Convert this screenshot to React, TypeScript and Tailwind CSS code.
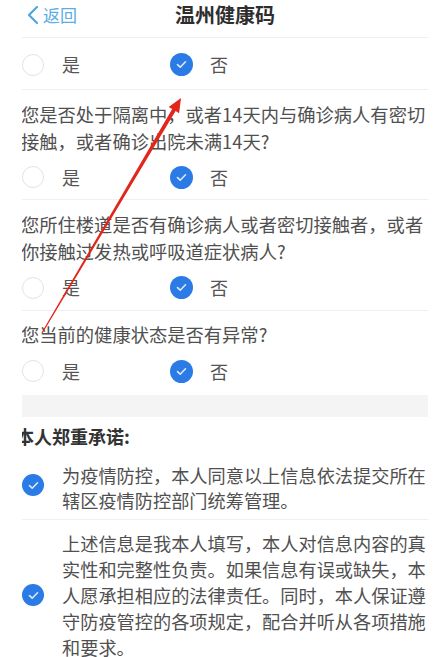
import React from "react";

const font = { fontFamily: '"Noto Sans CJK SC", "Noto Sans", sans-serif' };

function Check({ size = 23 }: { size?: number }) {
  return (
    <span
      className="flex items-center justify-center rounded-full bg-[#2a7be6] shrink-0"
      style={{ width: size, height: size }}
    >
      <svg width="11" height="9" viewBox="0 0 11 9" fill="none">
        <path d="M1.5 4.6 L4.2 7.2 L9.5 1.8" stroke="#dbe9fb" strokeWidth="1.6" strokeLinecap="round" strokeLinejoin="round" />
      </svg>
    </span>
  );
}

function Empty() {
  return <span className="w-[22px] h-[22px] rounded-full border-[1.5px] border-[#e3e3e3] shrink-0" />;
}

function RadioRow({ className }: { className: string }) {
  return (
    <div className={`flex items-center ${className}`}>
      <div className="flex items-center w-[148px]">
        <Empty />
        <span className="ml-[18px] text-[18px] text-[#555]">是</span>
      </div>
      <div className="flex items-center">
        <Check />
        <span className="ml-[17px] text-[18px] text-[#555]">否</span>
      </div>
    </div>
  );
}

function Divider() {
  return <div className="h-px bg-[#efefef]" />;
}

function Q({ lines, className }: { lines: string[]; className: string }) {
  return (
    <div className={`text-[18.3px] leading-[27px] text-[#505050] -ml-[1px] ${className}`}>
      {lines.map((l, i) => (
        <div key={i} className="whitespace-nowrap">{l}</div>
      ))}
    </div>
  );
}

export default function App() {
  return (
    <div className="relative w-[446px] h-[657px] bg-white overflow-hidden" style={font}>
      <div className="ml-[22px] w-[406px] overflow-hidden">
        {/* header */}
        <div className="relative h-[37px] flex items-center justify-center">
          <div className="absolute left-[4px] top-[5px] flex items-center text-[#5aaee3]">
            <svg width="14" height="20" viewBox="0 0 14 20" fill="none">
              <path d="M11 2 L3 10 L11 18" stroke="#4fa6df" strokeWidth="2.2" strokeLinecap="round" strokeLinejoin="round" />
            </svg>
            <span className="ml-[3px] text-[17px] leading-[20px]">返回</span>
          </div>
          <span className="text-[20px] font-bold text-[#2e2e2e] -mt-[7px]">温州健康码</span>
        </div>
        <Divider />
        <RadioRow className="h-[51px] pt-[2px]" />
        <Divider />
        <Q className="pt-[11px]" lines={["您是否处于隔离中，或者14天内与确诊病人有密切", "接触，或者确诊出院未满14天?"]} />
        <RadioRow className="h-[44px]" />
        <Divider />
        <Q className="pt-[11px]" lines={["您所住楼道是否有确诊病人或者密切接触者，或者", "你接触过发热或呼吸道症状病人?"]} />
        <RadioRow className="h-[45px]" />
        <Divider />
        <Q className="pt-[10px]" lines={["您当前的健康状态是否有异常?"]} />
        <RadioRow className="h-[46px]" />
        <div className="h-[22px] bg-[#f4f4f4] mt-[1px]" />
        <div className="-ml-[6px] pt-[6px] text-[18px] leading-[27px] font-bold text-[#333]">本人郑重承诺:</div>
        <div className="flex items-center pt-[13px] pb-[6px]">
          <span className="-mt-[6px]"><Check size={22} /></span>
          <div className="ml-[18px] text-[18.2px] leading-[25px] text-[#505050]">
            <div className="whitespace-nowrap">为疫情防控，本人同意以上信息依法提交所在</div>
            <div className="whitespace-nowrap">辖区疫情防控部门统筹管理。</div>
          </div>
        </div>
        <Divider />
        <div className="flex items-center pt-[10px]">
          <Check size={22} />
          <div className="ml-[18px] text-[18.2px] leading-[26px] text-[#505050]">
            <div className="whitespace-nowrap">上述信息是我本人填写，本人对信息内容的真</div>
            <div className="whitespace-nowrap">实性和完整性负责。如果信息有误或缺失，本</div>
            <div className="whitespace-nowrap">人愿承担相应的法律责任。同时，本人保证遵</div>
            <div className="whitespace-nowrap">守防疫管控的各项规定，配合并听从各项措施</div>
            <div className="whitespace-nowrap">和要求。</div>
          </div>
        </div>
      </div>
      {/* red annotation arrow */}
      <svg className="absolute left-0 top-0 pointer-events-none" width="446" height="657" viewBox="0 0 446 657">
        <polygon
          points="181,98 179.1,113.2 175.6,111.1 42.5,333.3 41.5,332.7 172.2,109.1 168.7,107"
          fill="#e2261c"
        />
      </svg>
    </div>
  );
}
